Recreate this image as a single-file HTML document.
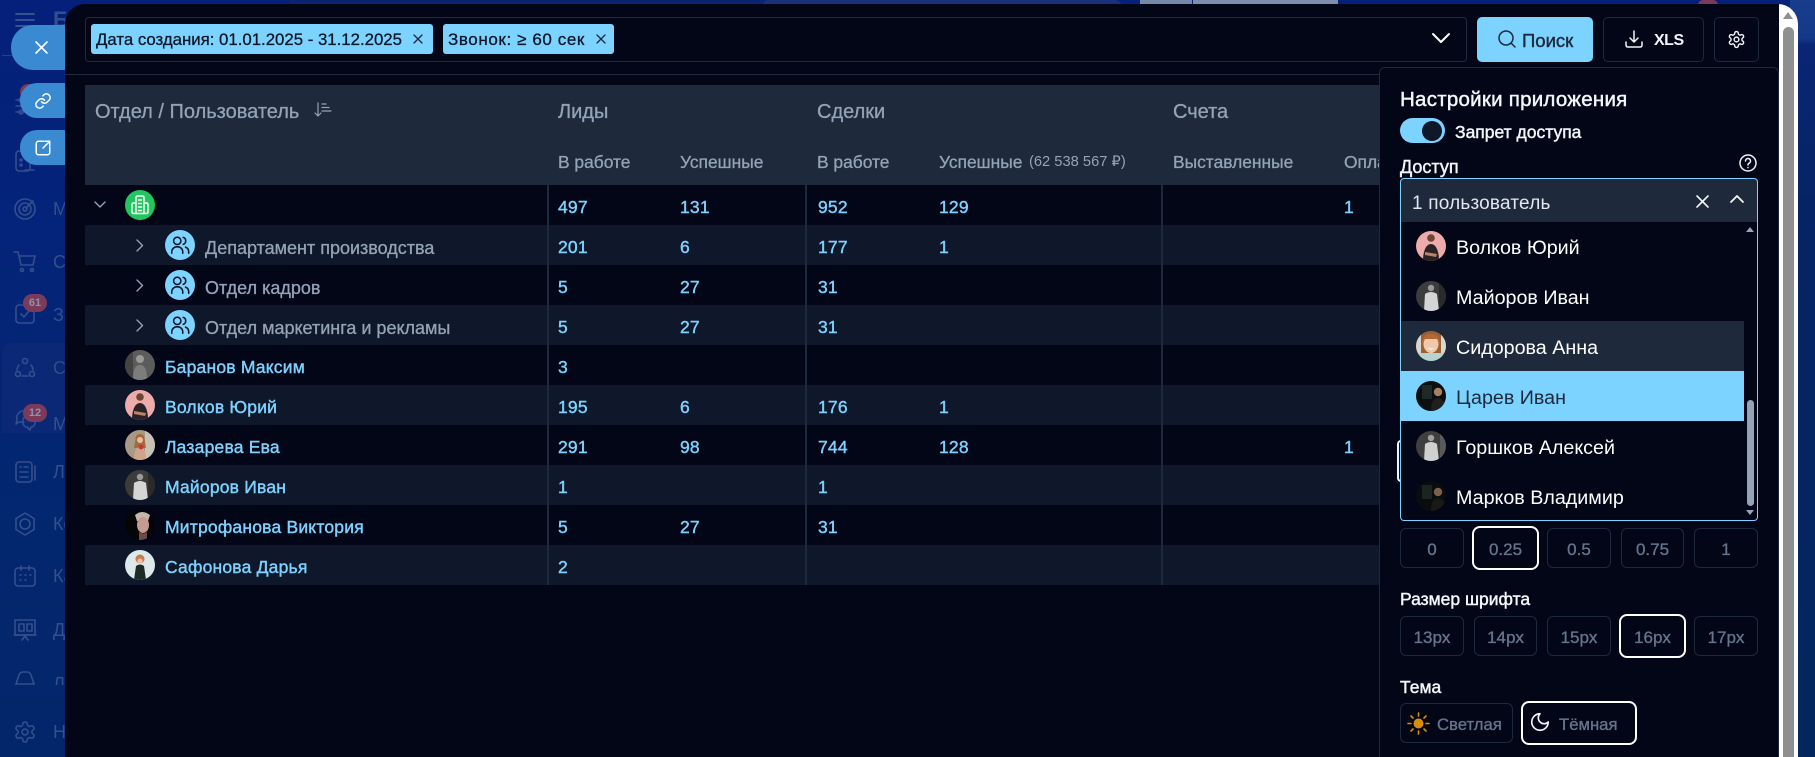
<!DOCTYPE html>
<html lang="ru"><head><meta charset="utf-8"><title>Отчёт</title>
<style>
html,body{margin:0;padding:0;width:1815px;height:757px;overflow:hidden;background:#03245f}
*{box-sizing:border-box}
body{font-family:"Liberation Sans","Noto Sans CJK SC",sans-serif;position:relative}
.a{position:absolute}
.t{position:absolute;white-space:nowrap;line-height:20px;font-size:16px}
.n{color:#7dd3ff;-webkit-text-stroke:.4px #7dd3ff;font-size:17.500px;letter-spacing:.2px}
.h{color:#94a3b8;-webkit-text-stroke:.3px #94a3b8;font-size:17.400px}
.hh{font-size:20px}
.d{color:#94a3b8;-webkit-text-stroke:.3px #94a3b8;font-size:18px;transform:translateY(1px)}
.w{color:#f4f6f9;-webkit-text-stroke:.45px #f4f6f9}
.u{color:#fff;font-size:19.700px;transform:translateY(1px)}
.b{position:absolute;border:1px solid #1e293b;border-radius:6px;color:#64748b;font-size:17px;display:flex;align-items:center;justify-content:center;-webkit-text-stroke:.35px #64748b;background:#020617;padding-top:3px}
.s{border:2px solid #fff;border-radius:8px}
.r{position:absolute;left:85px;width:1310px;height:40px}
.v{position:absolute;width:2px;top:185px;height:400px;background:#1e293b}
.av{position:absolute;width:30px;height:30px;border-radius:50%;overflow:hidden}
.av svg{display:block;width:30px;height:30px}
svg{overflow:visible}
.ic{position:absolute;fill:none;stroke-linecap:round;stroke-linejoin:round}
.si{position:absolute;left:13px;width:24px;height:24px;fill:none;stroke:#344f8d;stroke-width:1.6;stroke-linecap:round;stroke-linejoin:round}
.sl{position:absolute;left:53px;color:#344f8d;font-size:18px;line-height:24px;white-space:nowrap}
.pop{position:absolute;background:#3a8ad2;}
.badge{position:absolute;background:#7b3a5a;color:#8d93ad;font:bold 11px/18px "Liberation Sans",sans-serif;text-align:center;border-radius:9px}
</style></head>
<body>
<svg width="0" height="0" style="position:absolute">
<defs>
<symbol id="gear" viewBox="0 0 24 24"><path d="M12.22 2h-.44a2 2 0 0 0-2 2v.18a2 2 0 0 1-1 1.73l-.43.25a2 2 0 0 1-2 0l-.15-.08a2 2 0 0 0-2.73.73l-.22.38a2 2 0 0 0 .73 2.73l.15.1a2 2 0 0 1 1 1.72v.51a2 2 0 0 1-1 1.74l-.15.09a2 2 0 0 0-.73 2.73l.22.38a2 2 0 0 0 2.73.73l.15-.08a2 2 0 0 1 2 0l.43.25a2 2 0 0 1 1 1.73V20a2 2 0 0 0 2 2h.44a2 2 0 0 0 2-2v-.18a2 2 0 0 1 1-1.73l.43-.25a2 2 0 0 1 2 0l.15.08a2 2 0 0 0 2.73-.73l.22-.39a2 2 0 0 0-.73-2.73l-.15-.08a2 2 0 0 1-1-1.74v-.5a2 2 0 0 1 1-1.74l.15-.09a2 2 0 0 0 .73-2.73l-.22-.38a2 2 0 0 0-2.73-.73l-.15.08a2 2 0 0 1-2 0l-.43-.25a2 2 0 0 1-1-1.73V4a2 2 0 0 0-2-2z"/><circle cx="12" cy="12" r="3"/></symbol>
<symbol id="users" viewBox="0 0 24 24"><path d="M3 21v-1.500a5.500 5.500 0 0 1 5.500-5.500h1a5.500 5.500 0 0 1 5.500 5.500V21"/><circle cx="9" cy="7.500" r="4"/><path d="M15.500 3.700a4 4 0 0 1 0 7.600M18 14.300a5.500 5.500 0 0 1 3.500 5.200V21"/></symbol>
<symbol id="a1" viewBox="0 0 30 30"><rect width="30" height="30" fill="#eeabab"/><circle cx="15" cy="7" r="3.800" fill="#6b4536"/><path d="M7 30c0-10 3-17 8-17s8 7 8 17z" fill="#2a2224"/><path d="M9 21l12 2-1 3-11-2z" fill="#b9826c"/></symbol>
<symbol id="a2" viewBox="0 0 30 30"><rect width="30" height="30" fill="#5c5c5c"/><circle cx="15" cy="9" r="4" fill="#9a9a9a"/><path d="M8 30c0-10 2-15 7-15s7 5 7 15z" fill="#7d7d7d"/><rect width="8" height="30" fill="#444"/></symbol>
<symbol id="a3" viewBox="0 0 30 30"><rect width="30" height="30" fill="#a69a84"/><rect x="20" width="10" height="30" fill="#c6c2b5"/><path d="M11 6q4-4 8 0l2 12h-12z" fill="#a8683c"/><circle cx="15" cy="10" r="3" fill="#e6bea2"/><path d="M9 30c0-9 2-13 6-13s6 4 6 13z" fill="#cfa48a"/><circle cx="16" cy="17" r="2.400" fill="#c23a36"/></symbol>
<symbol id="a4" viewBox="0 0 30 30"><rect width="30" height="30" fill="#3c3c3c"/><circle cx="15" cy="7" r="3.200" fill="#9a9a9a"/><path d="M8 30l1-17q6-4 12 0l2 17z" fill="#d5d5d5"/><rect x="23" width="7" height="30" fill="#2a2a2a"/></symbol>
<symbol id="a5" viewBox="0 0 30 30"><rect width="30" height="30" fill="#050505"/><path d="M10 5q7-6 15 0l-2 6H12z" fill="#c7b6ae"/><ellipse cx="18" cy="15" rx="6" ry="8" fill="#c49a92"/><path d="M14 22q5 3 8 0v8h-8z" fill="#6b4a48"/></symbol>
<symbol id="a6" viewBox="0 0 30 30"><rect width="30" height="30" fill="#dbe9ea"/><circle cx="15" cy="9" r="4.500" fill="#c9794a"/><circle cx="15" cy="11" r="2.600" fill="#eec1a2"/><path d="M9 30l2-14q4-3 8 0l2 14z" fill="#1c2b25"/></symbol>
<symbol id="a7" viewBox="0 0 30 30"><rect width="30" height="30" fill="#9d5f34"/><rect y="22" width="30" height="8" fill="#b7d3d1"/><ellipse cx="15" cy="13" rx="7.500" ry="9" fill="#f2c8ad"/><path d="M6 14q0-11 9-11t9 11l-3-6H9z" fill="#b56a36"/><path d="M11 17q4 3 8 0-4 1-8 0z" fill="#fff"/><rect width="5" height="22" fill="#d9d5cf"/><rect x="25" width="5" height="22" fill="#d9d5cf"/></symbol>
<symbol id="a8" viewBox="0 0 30 30"><rect width="30" height="30" fill="#0b0f0f"/><rect x="6" y="4" width="10" height="14" fill="#1d2a26"/><circle cx="22" cy="11" r="4.200" fill="#a57f66"/><path d="M15 30q0-13 7-13t8 13z" fill="#20201f"/></symbol>
<symbol id="a9" viewBox="0 0 30 30"><rect width="30" height="30" fill="#3f3f3f"/><circle cx="15" cy="7" r="3.200" fill="#a0a0a0"/><path d="M8 30l1-17q6-4 12 0l2 17z" fill="#d0d0d0"/><rect x="24" width="6" height="30" fill="#5a5a5a"/></symbol>
<symbol id="a10" viewBox="0 0 30 30"><rect width="30" height="30" fill="#0a0d0d"/><rect x="6" y="4" width="10" height="14" fill="#1a2420"/><circle cx="22" cy="11" r="4.200" fill="#7c5f4c"/><path d="M15 30q0-13 7-13t8 13z" fill="#191918"/></symbol>
</defs></svg>

<!-- background -->
<div class="a" style="left:0;top:0;width:1815px;height:757px;background:linear-gradient(180deg,#05207a 0,#04237a 30%,#03276f 70%,#03256a 100%)"></div>
<div class="a" style="left:1790px;top:0;width:25px;height:757px;background:linear-gradient(180deg,#173d8c 0,#15398a 38px,#0a2574 45px,#062465 200px,#03265e 100%)"></div>
<div class="a" style="left:650px;top:0;width:75px;height:5px;border-radius:30px 30px 0 0;background:#2b4180"></div>
<div class="a" style="left:290px;top:0;width:480px;height:5px;background:#0a2572"></div>
<div class="a" style="left:763px;top:0;width:358px;height:5px;border-radius:20px 20px 0 0;background:#1a3079"></div>
<div class="a" style="left:1140px;top:0;width:52px;height:5px;background:#7488a8"></div>
<div class="a" style="left:1193px;top:0;width:145px;height:5px;background:#7d8fad"></div>
<div class="a" style="left:1698px;top:0;width:20px;height:5px;background:#7b3a5a;border-radius:10px 10px 0 0"></div>

<!-- sidebar -->
<svg class="ic" style="left:15px;top:13px;width:20px;height:14px;stroke:#3d5a94;stroke-width:1.8"><path d="M1 1h18M1 7h18M1 13h18"/></svg>
<div class="sl" style="top:8px;left:53px;font-weight:bold;font-size:22px">Битрикс</div>
<div class="a" style="left:2px;top:55px;width:63px;height:1px;background:#23407f"></div>
<div class="badge" style="left:20px;top:84px;width:20px;height:16px;background:#7b3a5a"></div>
<svg class="si" style="top:94px" viewBox="0 0 24 24"><path d="M3 6h18M3 12h18M3 18h18"/><circle cx="8" cy="6" r="2"/><circle cx="14" cy="12" r="2"/><circle cx="8" cy="18" r="2"/></svg>
<svg class="si" style="top:148px" viewBox="0 0 24 24"><rect x="3" y="3" width="14" height="20" rx="3"/><circle cx="8" cy="12" r="1"/><circle cx="8" cy="17" r="1"/><path d="M12 22h9"/></svg>
<svg class="si" style="top:197px" viewBox="0 0 24 24"><circle cx="12" cy="12" r="10"/><circle cx="12" cy="12" r="6"/><circle cx="12" cy="12" r="2"/><path d="M13 11l7-7"/></svg><div class="sl" style="top:197px">Маркетинг</div>
<svg class="si" style="top:250px" viewBox="0 0 24 24"><path d="M1 2h4l3 13h12l2-9H6"/><circle cx="9" cy="20" r="1.5"/><circle cx="19" cy="20" r="1.5"/></svg><div class="sl" style="top:250px">Склад</div>
<svg class="si" style="top:302px" viewBox="0 0 24 24"><rect x="3" y="3" width="18" height="18" rx="3"/><path d="M8 12l3 3 5-6"/></svg><div class="sl" style="top:303px">Задачи</div>
<div class="badge" style="left:23px;top:294px;width:24px;height:18px">61</div>
<div class="a" style="left:2px;top:343px;width:63px;height:90px;border-radius:10px 0 0 0;background:#0a2876"></div>
<svg class="si" style="top:356px" viewBox="0 0 24 24"><circle cx="12" cy="5" r="2.5"/><circle cx="5" cy="18" r="2.5"/><circle cx="19" cy="18" r="2.5"/><path d="M6 9a8 8 0 0 0-2 5M18 9a8 8 0 0 1 2 5M9 20h6"/></svg><div class="sl" style="top:356px;color:#2f4c87">Сделки</div>
<svg class="si" style="top:408px" viewBox="0 0 24 24"><path d="M11 14H6l-3 2 1-4a7 7 0 0 1 6-9"/><path d="M10 12a4 4 0 0 1 4-4h4a4 4 0 0 1 4 4v3a4 4 0 0 1-4 4l-1 3-3-3a4 4 0 0 1-4-4z"/></svg><div class="sl" style="top:412px">Мессенджер</div>
<div class="badge" style="left:23px;top:404px;width:24px;height:18px">12</div>
<svg class="si" style="top:460px" viewBox="0 0 24 24"><rect x="3" y="2" width="16" height="20" rx="3"/><path d="M7 7h1M11 7h4M7 12h8M7 17h8M22 6v14"/></svg><div class="sl" style="top:460px">Лиды</div>
<svg class="si" style="top:512px" viewBox="0 0 24 24"><path d="M12 1l9 5.500v11L12 23l-9-5.500v-11z"/><circle cx="12" cy="12" r="5"/></svg><div class="sl" style="top:512px">Контакты</div>
<svg class="si" style="top:564px" viewBox="0 0 24 24"><rect x="2" y="4" width="20" height="18" rx="3"/><path d="M8 2v4M16 2v4M7 11h1M12 11h1M17 11h1M7 16h1M12 16h1"/></svg><div class="sl" style="top:564px">Календарь</div>
<svg class="si" style="top:618px" viewBox="0 0 24 24"><rect x="2" y="2" width="20" height="15"/><path d="M1 17h22M9 22l3-4 3 4"/><rect x="6" y="6" width="5" height="7"/><rect x="14" y="6" width="5" height="7"/></svg><div class="sl" style="top:618px">Дашборд</div>
<div class="a" style="left:0;top:670px;width:65px;height:15px;overflow:hidden"><svg class="si" style="top:0" viewBox="0 0 24 24"><path d="M3 22v-8l3-9q1-3 4-3h4q3 0 4 3l3 9v8M3 14h18M9 18h6"/></svg><div class="sl" style="top:2px">Лента</div></div>
<svg class="si" style="top:720px" viewBox="0 0 24 24"><use href="#gear"/></svg><div class="sl" style="top:720px">Настройки</div>

<!-- floating side buttons -->
<div class="pop" style="left:11px;top:25px;width:60px;height:45px;border-radius:22px 0 0 22px"></div>
<svg class="ic" style="left:35px;top:41px;width:13px;height:13px;stroke:#fff;stroke-width:1.6"><path d="M1 1l11 11M12 1L1 12"/></svg>
<div class="pop" style="left:20px;top:83px;width:50px;height:35px;border-radius:17px 0 0 17px"></div>
<svg class="ic" style="left:34px;top:92px;width:18px;height:18px;stroke:#fff;stroke-width:2" viewBox="0 0 24 24"><path d="M10 13a5 5 0 0 0 7.500.5l3-3a5 5 0 0 0-7-7l-1.700 1.700"/><path d="M14 11a5 5 0 0 0-7.500-.5l-3 3a5 5 0 0 0 7 7l1.700-1.700"/></svg>
<div class="pop" style="left:20px;top:130px;width:50px;height:35px;border-radius:17px 0 0 17px"></div>
<svg class="ic" style="left:34px;top:139px;width:18px;height:18px;stroke:#fff;stroke-width:2" viewBox="0 0 24 24"><path d="M13 3H6a3 3 0 0 0-3 3v12a3 3 0 0 0 3 3h12a3 3 0 0 0 3-3v-7"/><path d="M21 3l-9 9M15 3h6v6"/></svg>

<!-- modal -->
<div class="a" style="left:65px;top:4px;width:1733px;height:760px;border-radius:20px 20px 0 0;background:#020617;overflow:hidden">
 <div class="a" style="left:1714px;top:0;width:19px;height:760px;background:#fff"></div>
 <div class="a" style="left:1718px;top:23px;width:11px;height:740px;border-radius:6px 6px 0 0;background:#8f8f8f"></div>
 <div class="a" style="left:1718px;top:8px;width:0;height:0;border-left:5.500px solid transparent;border-right:5.500px solid transparent;border-bottom:7px solid #8f8f8f"></div>
</div>
<div class="a" style="left:65px;top:74px;width:1320px;height:1px;background:#1e293b"></div>

<!-- filter bar -->
<div class="a" style="left:85px;top:17px;width:1382px;height:45px;border:1px solid #1e293b;border-radius:4px"></div>
<div class="a" style="left:91px;top:24px;width:342px;height:30px;background:#7dd3ff;border-radius:3px"></div>
<div class="t" style="left:96px;top:30px;color:#0f172a;-webkit-text-stroke:.3px #0f172a;font-size:16.800px">Дата создания: 01.01.2025 - 31.12.2025</div>
<svg class="ic" style="left:413px;top:34px;width:10px;height:10px;stroke:#1e293b;stroke-width:1.300"><path d="M1 1l8 8M9 1L1 9"/></svg>
<div class="a" style="left:443px;top:24px;width:171px;height:30px;background:#7dd3ff;border-radius:3px"></div>
<div class="t" style="left:448px;top:30px;color:#0f172a;-webkit-text-stroke:.3px #0f172a;font-size:17px;letter-spacing:.6px">Звонок: ≥ 60 сек</div>
<svg class="ic" style="left:596px;top:34px;width:10px;height:10px;stroke:#1e293b;stroke-width:1.300"><path d="M1 1l8 8M9 1L1 9"/></svg>
<svg class="ic" style="left:1432px;top:33px;width:18px;height:11px;stroke:#fff;stroke-width:2"><path d="M1 1l8 8 8-8"/></svg>

<div class="a" style="left:1477px;top:17px;width:116px;height:45px;background:#7dd3ff;border-radius:5px"></div>
<svg class="ic" style="left:1498px;top:30px;width:18px;height:18px;stroke:#1e293b;stroke-width:1.500"><circle cx="8" cy="8" r="7"/><path d="M13 13l4 4"/></svg>
<div class="t" style="left:1522px;top:31px;color:#1e293b;-webkit-text-stroke:.4px #1e293b;font-size:18.500px">Поиск</div>
<div class="a" style="left:1603px;top:17px;width:101px;height:45px;border:1px solid #1e293b;border-radius:5px"></div>
<svg class="ic" style="left:1625px;top:30px;width:18px;height:18px;stroke:#f1f5f9;stroke-width:1.500"><path d="M1 12v3q0 2 2 2h12q2 0 2-2v-3M9 1v11M5 8l4 4 4-4"/></svg>
<div class="t" style="left:1654px;top:31px;color:#f1f5f9;font-weight:bold;font-size:16px;letter-spacing:-.5px">XLS</div>
<div class="a" style="left:1714px;top:17px;width:45px;height:45px;border:1px solid #1e293b;border-radius:5px"></div>
<svg class="ic" style="left:1727px;top:30px;width:19px;height:19px;stroke:#f1f5f9;stroke-width:1.800" viewBox="0 0 24 24"><use href="#gear"/></svg>

<!-- table -->
<div class="a" style="left:85px;top:85px;width:1310px;height:100px;background:#1e293b"></div>
<div class="r" style="top:225px;background:#0f172a"></div>
<div class="r" style="top:305px;background:#0f172a"></div>
<div class="r" style="top:385px;background:#0f172a"></div>
<div class="r" style="top:465px;background:#0f172a"></div>
<div class="r" style="top:545px;background:#0f172a"></div>
<div class="v" style="left:547px"></div><div class="v" style="left:805px"></div><div class="v" style="left:1161px"></div>

<div class="t h hh" style="left:95px;top:102px">Отдел / Пользователь</div>
<svg class="ic" style="left:314px;top:102px;width:18px;height:16px;stroke:#94a3b8;stroke-width:1.200"><path d="M4 1v13M1 11l3 3 3-3M8 2h4M8 5.500h7M8 9h9"/></svg>
<div class="t h hh" style="left:558px;top:102px">Лиды</div>
<div class="t h hh" style="left:817px;top:102px">Сделки</div>
<div class="t h hh" style="left:1173px;top:102px">Счета</div>
<div class="t h" style="left:558px;top:152px">В работе</div>
<div class="t h" style="left:680px;top:152px">Успешные</div>
<div class="t h" style="left:817px;top:152px">В работе</div>
<div class="t h" style="left:939px;top:152px">Успешные</div>
<div class="t" style="left:1029px;top:152px;color:#94a3b8;font-size:14.700px">(62 538 567 ₽)</div>
<div class="t h" style="left:1173px;top:152px">Выставленные</div>
<div class="t h" style="left:1344px;top:152px">Оплаченные</div>

<!-- row 1 -->
<svg class="ic" style="left:94px;top:201px;width:12px;height:8px;stroke:#94a3b8;stroke-width:1.400"><path d="M1 1l5 5 5-5"/></svg>
<div class="a" style="left:125px;top:190px;width:30px;height:30px;border-radius:50%;background:#22c55e"></div>
<svg class="ic" style="left:130px;top:195px;width:20px;height:20px;stroke:#fff;stroke-width:1.400"><path d="M6 18.500V2.500q0-1.500 1.500-1.500h5q1.500 0 1.500 1.500v16zM6 8H3.500Q2 8 2 9.500v7.500q0 1.500 1.500 1.500H6M14 8h2.500Q18 8 18 9.500v7.500q0 1.500-1.500 1.500H14M8.500 5h3M8.500 8.500h3M8.500 12h3M8.500 15.500h3"/></svg>
<svg class="ic" style="left:136px;top:239px;width:8px;height:13px;stroke:#94a3b8;stroke-width:1.400"><path d="M1 1l5.500 5.500L1 12"/></svg>
<svg class="ic" style="left:136px;top:279px;width:8px;height:13px;stroke:#94a3b8;stroke-width:1.400"><path d="M1 1l5.500 5.500L1 12"/></svg>
<svg class="ic" style="left:136px;top:319px;width:8px;height:13px;stroke:#94a3b8;stroke-width:1.400"><path d="M1 1l5.500 5.500L1 12"/></svg>
<div class="a" style="left:165px;top:230px;width:30px;height:30px;border-radius:50%;background:#7dd3ff"></div>
<svg class="ic" style="left:169px;top:234px;width:22px;height:22px;stroke:#0f172a;stroke-width:1.700" viewBox="0 0 24 24"><use href="#users"/></svg>
<div class="a" style="left:165px;top:270px;width:30px;height:30px;border-radius:50%;background:#7dd3ff"></div>
<svg class="ic" style="left:169px;top:274px;width:22px;height:22px;stroke:#0f172a;stroke-width:1.700" viewBox="0 0 24 24"><use href="#users"/></svg>
<div class="a" style="left:165px;top:310px;width:30px;height:30px;border-radius:50%;background:#7dd3ff"></div>
<svg class="ic" style="left:169px;top:314px;width:22px;height:22px;stroke:#0f172a;stroke-width:1.700" viewBox="0 0 24 24"><use href="#users"/></svg>
<div class="t d" style="left:205px;top:237px">Департамент производства</div>
<div class="t d" style="left:205px;top:277px">Отдел кадров</div>
<div class="t d" style="left:205px;top:317px">Отдел маркетинга и рекламы</div>

<div class="av" style="left:125px;top:350px"><svg><use href="#a2"/></svg></div>
<div class="av" style="left:125px;top:390px"><svg><use href="#a1"/></svg></div>
<div class="av" style="left:125px;top:430px"><svg><use href="#a3"/></svg></div>
<div class="av" style="left:125px;top:470px"><svg><use href="#a4"/></svg></div>
<div class="av" style="left:125px;top:510px"><svg><use href="#a5"/></svg></div>
<div class="av" style="left:125px;top:550px"><svg><use href="#a6"/></svg></div>
<div class="t n" style="left:165px;top:357px">Баранов Максим</div>
<div class="t n" style="left:165px;top:397px">Волков Юрий</div>
<div class="t n" style="left:165px;top:437px">Лазарева Ева</div>
<div class="t n" style="left:165px;top:477px">Майоров Иван</div>
<div class="t n" style="left:165px;top:517px">Митрофанова Виктория</div>
<div class="t n" style="left:165px;top:557px">Сафонова Дарья</div>

<!-- numbers -->
<div class="t n" style="left:558px;top:197px">497</div><div class="t n" style="left:680px;top:197px">131</div><div class="t n" style="left:818px;top:197px">952</div><div class="t n" style="left:939px;top:197px">129</div><div class="t n" style="left:1344px;top:197px">1</div>
<div class="t n" style="left:558px;top:237px">201</div><div class="t n" style="left:680px;top:237px">6</div><div class="t n" style="left:818px;top:237px">177</div><div class="t n" style="left:939px;top:237px">1</div>
<div class="t n" style="left:558px;top:277px">5</div><div class="t n" style="left:680px;top:277px">27</div><div class="t n" style="left:818px;top:277px">31</div>
<div class="t n" style="left:558px;top:317px">5</div><div class="t n" style="left:680px;top:317px">27</div><div class="t n" style="left:818px;top:317px">31</div>
<div class="t n" style="left:558px;top:357px">3</div>
<div class="t n" style="left:558px;top:397px">195</div><div class="t n" style="left:680px;top:397px">6</div><div class="t n" style="left:818px;top:397px">176</div><div class="t n" style="left:939px;top:397px">1</div>
<div class="t n" style="left:558px;top:437px">291</div><div class="t n" style="left:680px;top:437px">98</div><div class="t n" style="left:818px;top:437px">744</div><div class="t n" style="left:939px;top:437px">128</div><div class="t n" style="left:1344px;top:437px">1</div>
<div class="t n" style="left:558px;top:477px">1</div><div class="t n" style="left:818px;top:477px">1</div>
<div class="t n" style="left:558px;top:517px">5</div><div class="t n" style="left:680px;top:517px">27</div><div class="t n" style="left:818px;top:517px">31</div>
<div class="t n" style="left:558px;top:557px">2</div>

<!-- settings panel -->
<div class="a" style="left:1379px;top:67px;width:400px;height:700px;background:#020617;border:1px solid #1e293b;border-radius:6px 6px 0 0"></div>
<div class="t w" style="left:1400px;top:90px;font-size:20.500px;letter-spacing:.25px">Настройки приложения</div>
<div class="a" style="left:1400px;top:118px;width:45px;height:25px;border-radius:13px;background:#7dd3ff"></div>
<div class="a" style="left:1422px;top:120.500px;width:20px;height:20px;border-radius:50%;background:#0f172a"></div>
<div class="t w" style="left:1455px;top:122px;font-size:17.500px">Запрет доступа</div>
<div class="t w" style="left:1400px;top:157px;font-size:18px">Доступ</div>
<svg class="ic" style="left:1739px;top:154px;width:18px;height:18px;stroke:#f1f5f9;stroke-width:1.500"><circle cx="9" cy="9" r="8"/><path d="M6.500 7a2.500 2.500 0 1 1 3.500 2.300Q9 9.800 9 11"/><path d="M9 13.500v.1"/></svg>

<div class="a" style="left:1397px;top:440px;width:8px;height:42px;border:2px solid #f1f5f9;border-radius:6px"></div>

<div class="a" style="left:1400px;top:178px;width:358px;height:45px;background:#1e293b;border:1px solid #7dd3ff;border-radius:4px 4px 0 0"></div>
<div class="t" style="left:1412px;top:194px;color:#e2e8f0;font-size:19px;letter-spacing:.2px">1 пользователь</div>
<svg class="ic" style="left:1696px;top:195px;width:13px;height:13px;stroke:#f1f5f9;stroke-width:1.600"><path d="M1 1l11 11M12 1L1 12"/></svg>
<svg class="ic" style="left:1730px;top:195px;width:14px;height:9px;stroke:#f1f5f9;stroke-width:1.800"><path d="M1 7l6-6 6 6"/></svg>

<div class="a" style="left:1400px;top:222px;width:358px;height:299px;background:#020617;border:1px solid #7dd3ff;border-top:none;border-radius:0 0 4px 4px;overflow:hidden">
 <div class="a" style="left:0;top:99px;width:343px;height:50px;background:#1e293b"></div>
 <div class="a" style="left:0;top:149px;width:343px;height:50px;background:#7dd3ff"></div>
 <div class="a" style="left:345px;top:5px;width:0;height:0;border-left:4.500px solid transparent;border-right:4.500px solid transparent;border-bottom:5px solid #94a3b8"></div>
 <div class="a" style="left:346px;top:178px;width:7px;height:106px;border-radius:4px;background:#94a3b8"></div>
 <div class="a" style="left:345px;top:288px;width:0;height:0;border-left:4.500px solid transparent;border-right:4.500px solid transparent;border-top:5px solid #94a3b8"></div>
</div>
<div class="av" style="left:1416px;top:231px"><svg><use href="#a1"/></svg></div>
<div class="av" style="left:1416px;top:281px"><svg><use href="#a4"/></svg></div>
<div class="av" style="left:1416px;top:331px"><svg><use href="#a7"/></svg></div>
<div class="av" style="left:1416px;top:381px"><svg><use href="#a8"/></svg></div>
<div class="av" style="left:1416px;top:431px"><svg><use href="#a9"/></svg></div>
<div class="av" style="left:1416px;top:481px"><svg><use href="#a10"/></svg></div>
<div class="t u" style="left:1456px;top:237px">Волков Юрий</div>
<div class="t u" style="left:1456px;top:287px">Майоров Иван</div>
<div class="t u" style="left:1456px;top:337px">Сидорова Анна</div>
<div class="t u" style="left:1456px;top:387px;color:#1e293b">Царев Иван</div>
<div class="t u" style="left:1456px;top:437px">Горшков Алексей</div>
<div class="t u" style="left:1456px;top:487px">Марков Владимир</div>

<!-- buttons -->
<div class="b" style="left:1400px;top:528px;width:64px;height:40px">0</div>
<div class="b s" style="left:1472px;top:526px;width:67px;height:44px">0.25</div>
<div class="b" style="left:1547px;top:528px;width:64px;height:40px">0.5</div>
<div class="b" style="left:1621px;top:528px;width:63px;height:40px">0.75</div>
<div class="b" style="left:1694px;top:528px;width:64px;height:40px">1</div>
<div class="t w" style="left:1400px;top:589px;font-size:17.500px">Размер шрифта</div>
<div class="b" style="left:1400px;top:616px;width:64px;height:40px">13px</div>
<div class="b" style="left:1474px;top:616px;width:63px;height:40px">14px</div>
<div class="b" style="left:1547px;top:616px;width:64px;height:40px">15px</div>
<div class="b s" style="left:1619px;top:614px;width:67px;height:44px">16px</div>
<div class="b" style="left:1694px;top:616px;width:64px;height:40px">17px</div>
<div class="t w" style="left:1400px;top:677px;font-size:17.500px">Тема</div>
<div class="b" style="left:1400px;top:703px;width:113px;height:40px;justify-content:flex-start;padding-left:36px;font-size:16.700px">Светлая</div>
<svg class="ic" style="left:1407px;top:712px;width:23px;height:23px;stroke:#d98e04;stroke-width:1.600"><circle cx="11.500" cy="11.500" r="5" fill="#d98e04" stroke="none"/><path d="M11.500 1v3M11.500 19v3M1 11.500h3M19 11.500h3M4 4l2 2M17 17l2 2M19 4l-2 2M6 17l-2 2"/></svg>
<div class="b s" style="left:1521px;top:701px;width:116px;height:44px;justify-content:flex-start;padding-left:36px;font-size:16.700px">Тёмная</div>
<svg class="ic" style="left:1529px;top:711px;width:22px;height:22px;stroke:#f1f5f9;stroke-width:1.800" viewBox="0 0 24 24"><path d="M12 3a6 6 0 0 0 9 9 9 9 0 1 1-9-9Z"/></svg>
</body></html>
